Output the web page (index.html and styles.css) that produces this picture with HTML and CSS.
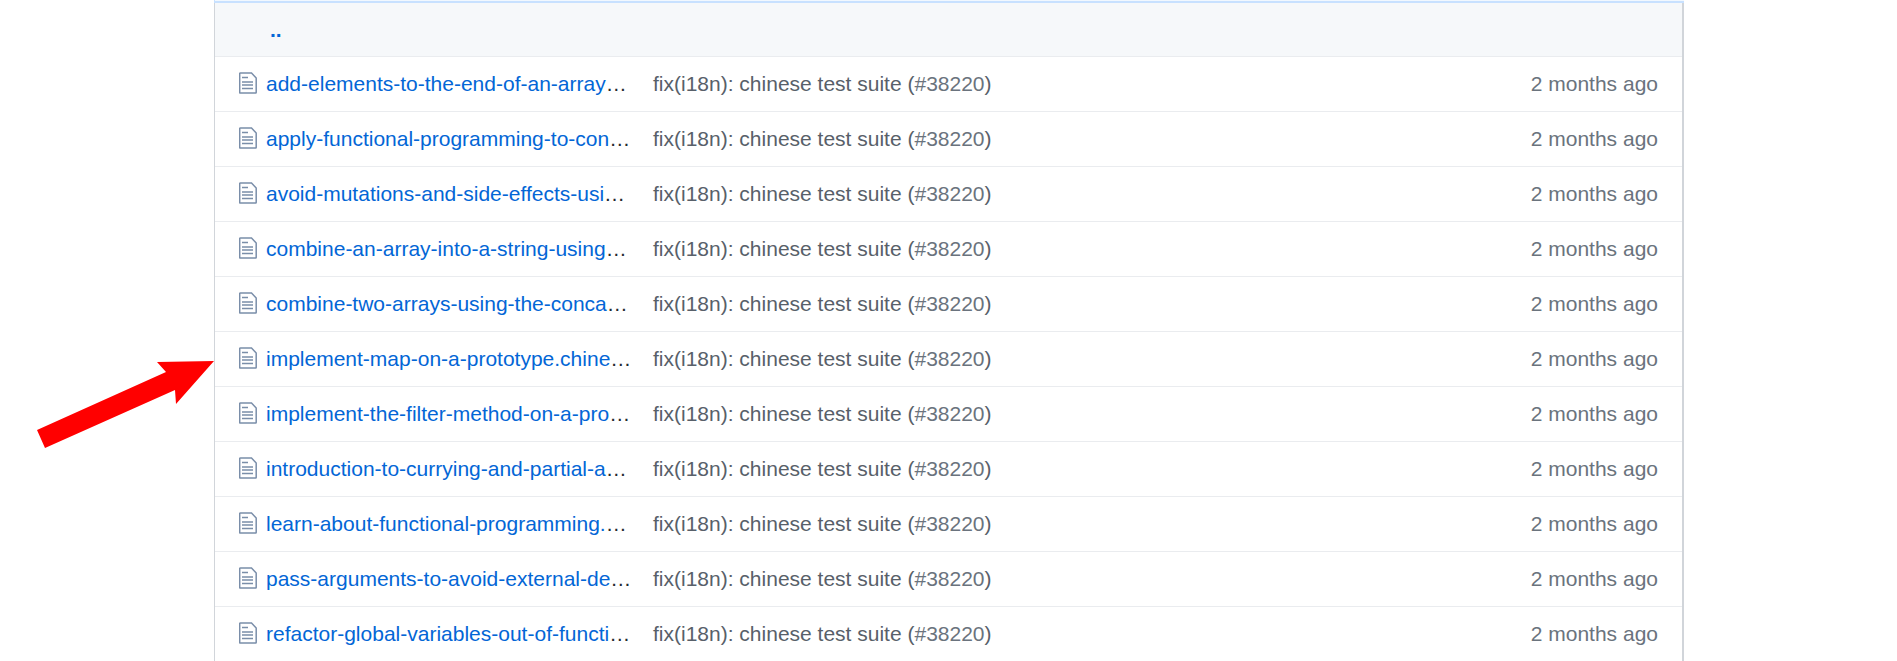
FILE: index.html
```html
<!DOCTYPE html>
<html lang="en">
<head>
<meta charset="utf-8">
<title>Files</title>
<link rel="stylesheet" href="styles.css">
</head>
<body>
<main class="page">
<div class="commit-bar"></div>
<table class="files">
<tbody id="rows">
<tr class="up"><td class="icon"></td><td class="name"><a href="#" title="Go to parent directory">..</a></td><td class="message"></td><td class="age"></td></tr>
</tbody>
</table>
<svg class="arrow" width="180" height="92" viewBox="0 0 180 92" aria-hidden="true"><path d="M0 69 129 11 120 1 177 0 139 43 138 29 8 87Z" fill="#f00"/></svg>
</main>
<script src="files.js"></script>
</body>
</html>
```
FILE: files.js
```js
const names = [
  "add-elements-to-the-end-of-an-array",
  "apply-functional-programming-to-con",
  "avoid-mutations-and-side-effects-usi",
  "combine-an-array-into-a-string-using",
  "combine-two-arrays-using-the-conca",
  "implement-map-on-a-prototype.chine",
  "implement-the-filter-method-on-a-pro",
  "introduction-to-currying-and-partial-a",
  "learn-about-functional-programming.",
  "pass-arguments-to-avoid-external-de",
  "refactor-global-variables-out-of-functi"
];
const icon = `<svg class="file-icon" width="18" height="22" viewBox="0 0 18 22" fill="none" aria-hidden="true">
<path d="M1.5 1H12.5L17.2 6V20.5Q17.2 21 16.7 21H1.5Q.7 21 .7 20.5V1.5Q.7 1 1.5 1Z" stroke="#7a8ea9" stroke-width="1.5"/>
<path d="M3 5.5H9M3 10H14M3 13H14M3 16.5H14" stroke="#7a8ea9" stroke-width="1.4"/></svg>`;
document.getElementById("rows").insertAdjacentHTML("beforeend", names.map(name => `<tr>
<td class="icon">${icon}</td>
<td class="name"><a href="#">${name}</a>…</td>
<td class="message"><a href="#">fix(i18n): chinese test suite (<span class="issue">#38220</span>)</a></td>
<td class="age">2 months ago</td></tr>`).join(""));
```
FILE: styles.css
```css
* { box-sizing: border-box; }
body {
  margin: 0;
  padding-left: 1px;
  background: #fff;
  color: #24292e;
  font: 21px/30px "Liberation Sans", Arial, sans-serif;
}
.page {
  position: relative;
  max-width: 1470px;
  margin: 0 auto;
}
.commit-bar {
  height: 3px;
  background: #f1f8ff;
  border-bottom: 2px solid #c8e1ff;
  border-left: 1px solid #c8e1ff;
}
.files {
  width: 100%;
  table-layout: fixed;
  border-collapse: separate;
  border-spacing: 0;
  border: solid #d1d5da;
  border-width: 0 2px 0 1px;
}
td {
  height: 55px;
  padding: 0;
  border-top: 1px solid #eaecef;
  white-space: nowrap;
}
.up td {
  height: 53px;
  border-top: 0;
  background: #f6f8fa;
}
.icon { width: 51px; padding: 0 0 2px 24px; }
.name { width: 387px; }
.age { width: 180px; padding-right: 24px; text-align: right; color: #6a737d; }
.file-icon { display: block; }
a { color: #0366d6; text-decoration: none; }
a:hover { text-decoration: underline; }
.up a { padding-left: 4px; font-weight: 700; }
.message a { color: #586069; }
.message .issue { color: #6a737d; }
.arrow {
  position: absolute;
  top: 361px;
  left: -177px;
}
```
